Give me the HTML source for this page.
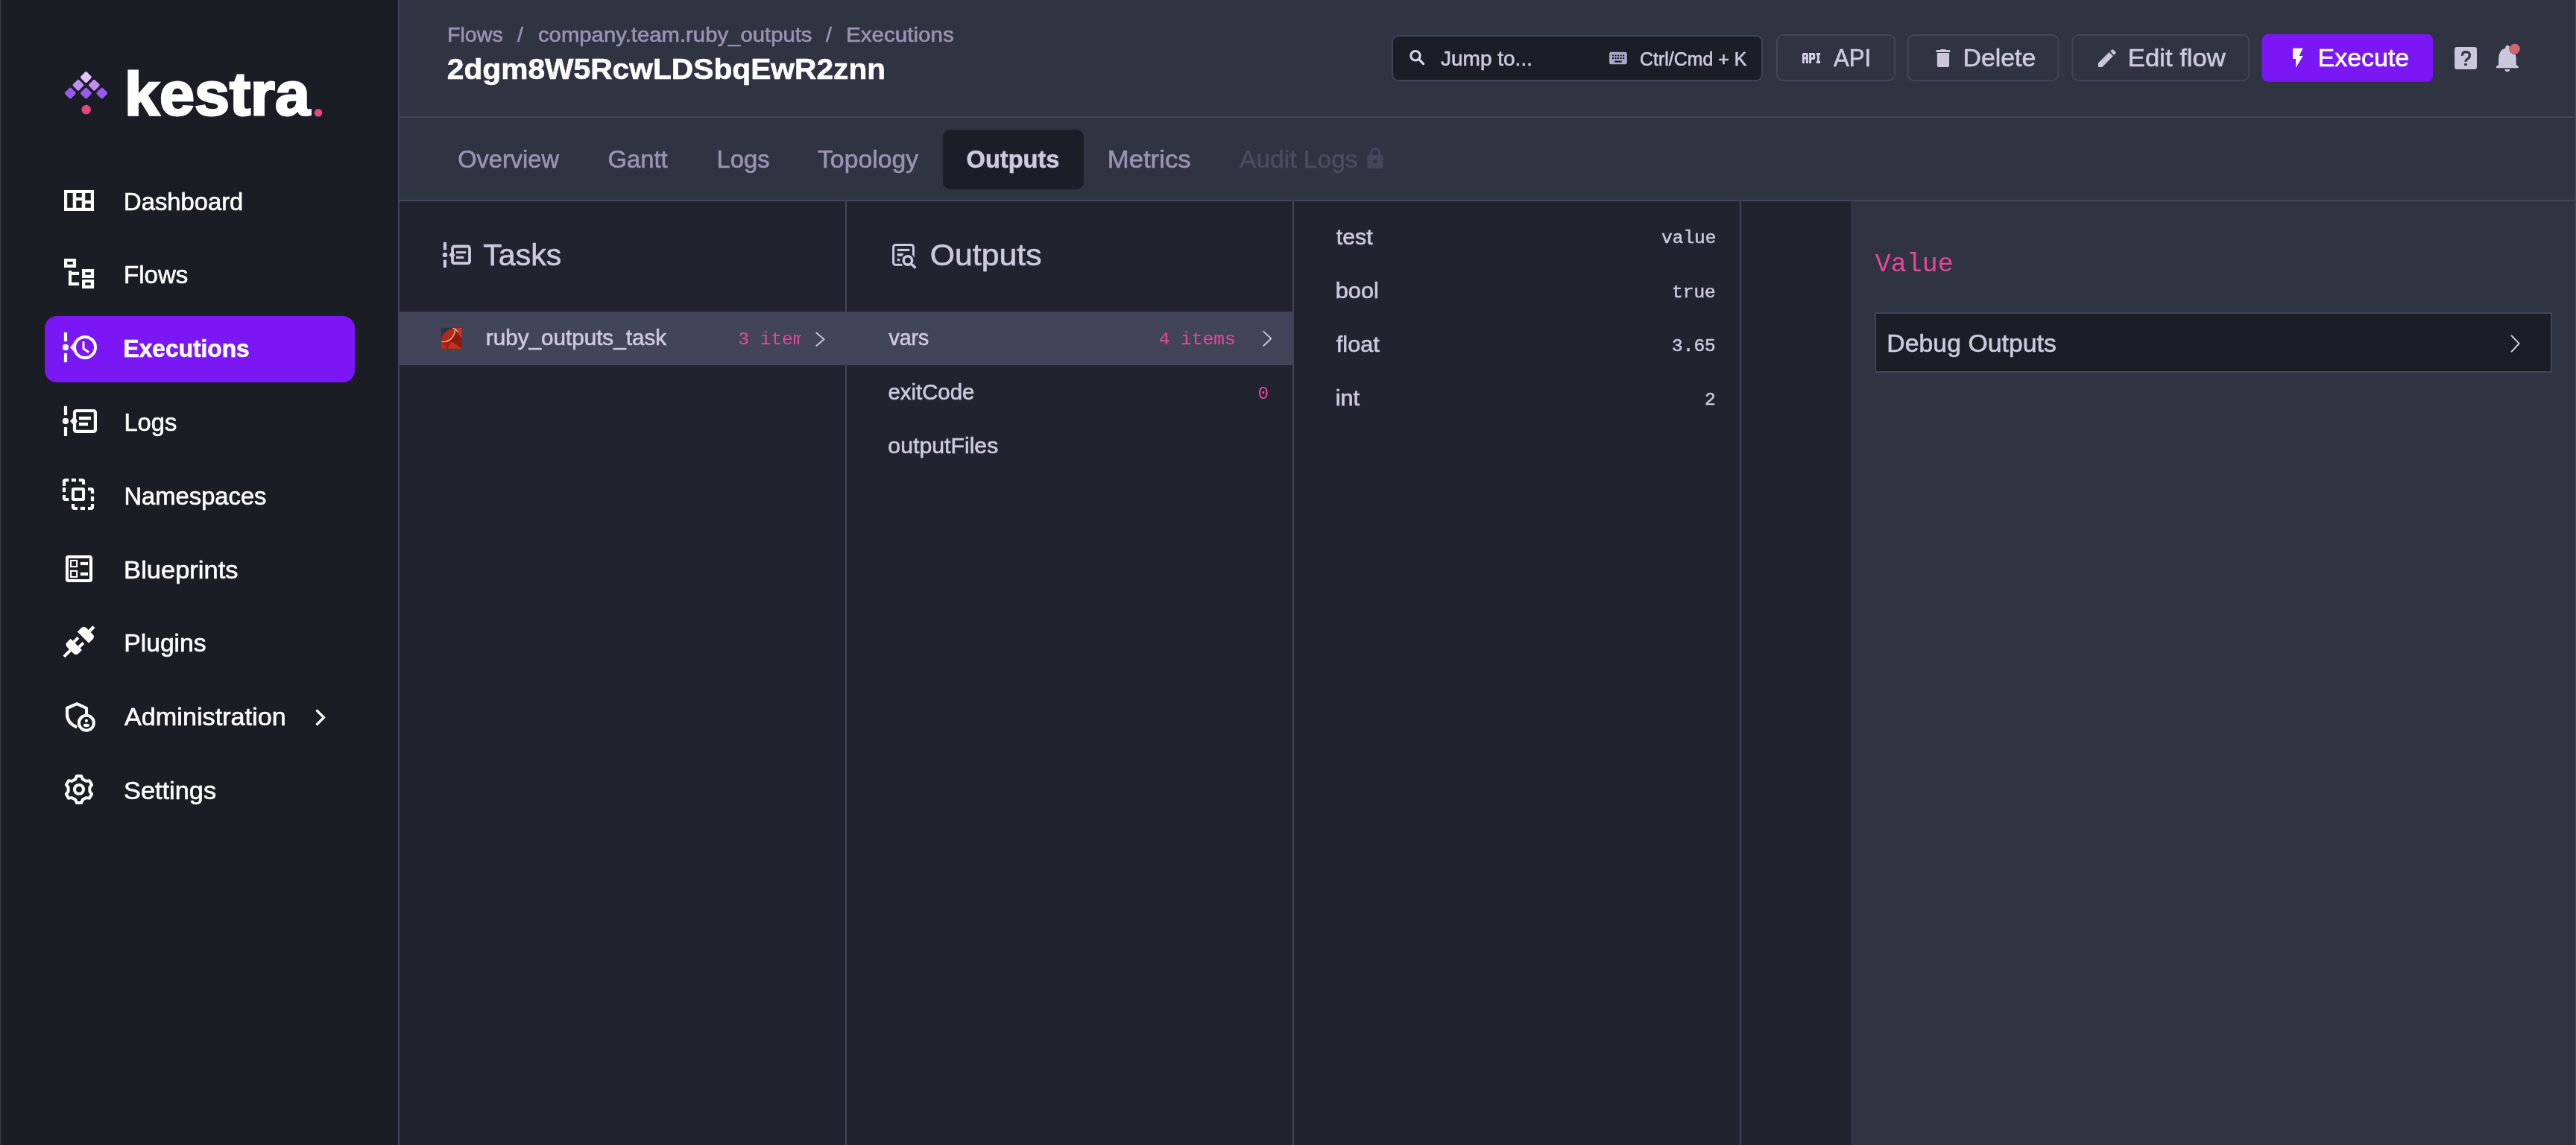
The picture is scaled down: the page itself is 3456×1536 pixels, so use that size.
<!DOCTYPE html>
<html><head><meta charset="utf-8"><title>Kestra - Execution Outputs</title>
<style>
html,body{margin:0;padding:0;width:3456px;height:1536px;overflow:hidden;background:#21242E;}
svg{display:block;will-change:transform;}
</style></head>
<body>
<svg width="3456" height="1536" viewBox="0 0 3456 1536" font-family="Liberation Sans, sans-serif">
<defs>
  <clipPath id="clip3"><rect x="980" y="420" width="94.5" height="70"/></clipPath>
  <mask id="bellmask"><rect x="3330" y="50" width="70" height="60" fill="#fff"/><circle cx="3373.9" cy="65.6" r="7.4" fill="#000"/></mask>
  <mask id="outmask"><rect x="1180" y="310" width="70" height="70" fill="#fff"/><circle cx="1217.9" cy="349.4" r="9.6" fill="#000"/></mask>
  <linearGradient id="rubyg" x1="0" y1="0" x2="1" y2="1">
    <stop offset="0" stop-color="#A8200F"/><stop offset="0.5" stop-color="#C93A22"/><stop offset="1" stop-color="#8E1A0E"/>
  </linearGradient>
</defs>
<!-- ===== SIDEBAR ===== -->
<rect x="0" y="0" width="534" height="1536" fill="#1B1D25"/>
<rect x="0" y="0" width="1" height="1536" fill="#363940"/><rect x="1" y="0" width="1" height="1536" fill="#24262D"/>
<rect x="534" y="0" width="2" height="1536" fill="#404559"/>

<!-- logo -->
<g id="logo">
  <rect x="109.60" y="97.80" width="11.6" height="11.6" rx="2" fill="#E3C6FD" transform="rotate(45 115.4 103.6)"/>
  <rect x="99.20" y="108.40" width="11.6" height="11.6" rx="2" fill="#BF8DF4" transform="rotate(45 105 114.2)"/>
  <rect x="120.50" y="108.40" width="11.6" height="11.6" rx="2" fill="#BF8DF4" transform="rotate(45 126.3 114.2)"/>
  <rect x="88.50" y="119.20" width="11.6" height="11.6" rx="2" fill="#9B58F4" transform="rotate(45 94.3 125)"/>
  <rect x="109.60" y="119.20" width="11.6" height="11.6" rx="2" fill="#9B58F4" transform="rotate(45 115.4 125)"/>
  <rect x="130.90" y="119.20" width="11.6" height="11.6" rx="2" fill="#9B58F4" transform="rotate(45 136.7 125)"/>
  <circle cx="115.7" cy="147.1" r="6.3" fill="#E4477D"/>
  <text x="167" y="153.7" font-size="82" font-weight="700" fill="#FFFFFF" stroke="#FFFFFF" stroke-width="2.8" textLength="249" lengthAdjust="spacingAndGlyphs">kestra</text>
  <circle cx="427" cy="151.2" r="5.3" fill="#E4477D"/>
</g>

<!-- active menu bg -->
<rect x="60" y="424" width="416" height="89" rx="16" fill="#7B17F5"/>

<!-- menu icons -->
<g id="menuicons" fill="#FFFFFF">
  <!-- dashboard -->
  <path fill-rule="evenodd" d="M86,255 H126 V283 H86 Z M90.2,259.1 V278.65 H97.7 V259.1 Z M102.25,259.1 V264.8 H109.75 V259.1 Z M102.25,269.1 V278.65 H109.75 V269.1 Z M114.3,259.1 V268.65 H121.8 V259.1 Z M114.3,273.2 V278.65 H121.8 V273.2 Z"/>
  <!-- flows -->
  <path fill-rule="evenodd" d="M86,347 H102.1 V359.1 H86 Z M90.2,351 V354.8 H97.8 V351 Z"/>
  <path d="M92,363 H96.1 V364.75 H106.1 V369 H96.1 V378.8 H106.1 V383 H92 Z"/>
  <path fill-rule="evenodd" d="M110,361 H126.1 V373 H110 Z M114.3,365.2 V368.7 H121.8 V365.2 Z"/>
  <path fill-rule="evenodd" d="M110,375 H126.1 V387 H110 Z M114.3,379.1 V382.7 H121.8 V379.1 Z"/>
  <!-- executions -->
  <rect x="85.9" y="445.9" width="4.2" height="12"/>
  <rect x="85.9" y="473.8" width="4.2" height="12.1"/>
  <circle cx="87.95" cy="465.9" r="4.1"/>
  <circle cx="114" cy="465.9" r="14" fill="none" stroke="#FFFFFF" stroke-width="4"/>
  <path d="M93.9,465.9 L101.5,457.5 L101.5,474.3 Z"/>
  <path d="M112,458 V467.7 L119,472.5" fill="none" stroke="#FFFFFF" stroke-width="3" stroke-linejoin="miter"/>
  <!-- logs -->
  <rect x="85.9" y="544.8" width="4.2" height="12.2"/>
  <rect x="85.9" y="572.9" width="4.2" height="12.1"/>
  <circle cx="87.95" cy="564.9" r="4.1"/>
  <rect x="100" y="551" width="27.9" height="27.9" rx="2.5" fill="none" stroke="#FFFFFF" stroke-width="4.2"/>
  <path d="M93.85,564.9 L100,558.5 L104,564.9 L100,571.3 Z"/>
  <rect x="105.9" y="558.8" width="16.1" height="4.4"/>
  <rect x="105.9" y="566.8" width="12.1" height="4.3"/>
  <!-- namespaces -->
  <rect x="98" y="656" width="14" height="14" fill="none" stroke="#FFFFFF" stroke-width="4.1" rx="1"/>
  <path d="M86,652 V646 Q86,644 88,644 H92.2" fill="none" stroke="#FFFFFF" stroke-width="4.2"/>
  <path d="M95.9,644 H102" fill="none" stroke="#FFFFFF" stroke-width="4.2"/>
  <path d="M105.8,644 H110 Q112,644 112,646 V650" fill="none" stroke="#FFFFFF" stroke-width="4.2"/>
  <path d="M86,654 V660.2" fill="none" stroke="#FFFFFF" stroke-width="4.2"/>
  <path d="M86,664 V668 Q86,670 88,670 H92.2" fill="none" stroke="#FFFFFF" stroke-width="4.2"/>
  <path d="M118,656 H122 Q124,656 124,658 V662.2" fill="none" stroke="#FFFFFF" stroke-width="4.2"/>
  <path d="M124,666 V672.2" fill="none" stroke="#FFFFFF" stroke-width="4.2"/>
  <path d="M98,676 V680 Q98,682 100,682 H104" fill="none" stroke="#FFFFFF" stroke-width="4.2"/>
  <path d="M107.9,682 H114" fill="none" stroke="#FFFFFF" stroke-width="4.2"/>
  <path d="M118,682 H122 Q124,682 124,680 V676" fill="none" stroke="#FFFFFF" stroke-width="4.2"/>
  <!-- blueprints -->
  <rect x="90" y="747" width="32" height="32" rx="2" fill="none" stroke="#FFFFFF" stroke-width="4.1"/>
  <rect x="95" y="752" width="8.1" height="8.1" fill="none" stroke="#FFFFFF" stroke-width="2.1"/>
  <rect x="95" y="765.9" width="8.1" height="8.1" fill="none" stroke="#FFFFFF" stroke-width="2.1"/>
  <rect x="107.9" y="753.9" width="10.1" height="4.2"/>
  <rect x="107.9" y="767.9" width="10.1" height="4.3"/>
  <!-- plugins -->
  <g transform="translate(105.85 860.85) rotate(-45)">
    <path d="M7.95,-10.8 H15.2 Q20.2,-10.8 20.2,-5.8 V5.8 Q20.2,10.8 15.2,10.8 H7.95 Z"/>
    <rect x="20" y="-2.2" width="8.4" height="4.4"/>
    <path d="M-5,-10.8 H-11.3 Q-16.3,-10.8 -16.3,-5.8 V5.8 Q-16.3,10.8 -11.3,10.8 H-5 Z"/>
    <rect x="-5.2" y="-6.5" width="8.4" height="4"/>
    <rect x="-5.2" y="3.3" width="8.4" height="4"/>
    <rect x="-28.2" y="-2" width="13.2" height="4"/>
  </g>
  <!-- administration -->
  <path d="M116,959 V950 L103.2,944.2 L90,950 V958 Q90,970 103.2,975.6" fill="none" stroke="#FFFFFF" stroke-width="4.1" stroke-linejoin="round"/>
  <circle cx="115.9" cy="969.8" r="10" fill="none" stroke="#FFFFFF" stroke-width="4"/>
  <circle cx="115.9" cy="966.9" r="2.1"/>
  <ellipse cx="115.9" cy="973" rx="4.1" ry="2.2"/>
  <!-- settings -->
  <path d="M101.10,1045.25 L102.91,1041.06 L109.09,1041.06 L110.90,1045.25 L115.46,1047.88 L119.99,1047.36 L123.08,1052.70 L120.36,1056.37 L120.36,1061.63 L123.08,1065.30 L119.99,1070.64 L115.46,1070.12 L110.90,1072.75 L109.09,1076.94 L102.91,1076.94 L101.10,1072.75 L96.54,1070.12 L92.01,1070.64 L88.92,1065.30 L91.64,1061.63 L91.64,1056.37 L88.92,1052.70 L92.01,1047.36 L96.54,1047.88 Z" fill="none" stroke="#FFFFFF" stroke-width="4" stroke-linejoin="round"/>
  <circle cx="106" cy="1059" r="6" fill="none" stroke="#FFFFFF" stroke-width="4.2"/>
  <!-- admin chevron -->
  <path d="M424.5,952.5 L434.5,962.5 L424.5,972.5" fill="none" stroke="#FFFFFF" stroke-width="3.2"/>
</g>

<!-- ===== HEADER ===== -->
<rect x="536" y="0" width="2919" height="156" fill="#2F3342"/>
<rect x="536" y="156" width="2920" height="2" fill="#404559"/>

<!-- jump to -->
<rect x="1868" y="48" width="496" height="60" rx="8" fill="#1C1E27" stroke="#404559" stroke-width="2"/>
<circle cx="1899" cy="74.8" r="6.2" fill="none" stroke="#D9D5EE" stroke-width="3"/>
<path d="M1903.8,79.6 L1909.6,85.6" stroke="#D9D5EE" stroke-width="3.2" stroke-linecap="round"/>
<path fill-rule="evenodd" fill="#ADA5CC" d="M2161.6,69.7 H2180.3 Q2182.8,69.7 2182.8,72.2 V83.8 Q2182.8,86.3 2180.3,86.3 H2161.6 Q2159.1,86.3 2159.1,83.8 V72.2 Q2159.1,69.7 2161.6,69.7 Z
 M2162.9,73.4 h2.2 v2.2 h-2.2 Z M2166.4,73.4 h2.2 v2.2 h-2.2 Z M2169.9,73.4 h2.2 v2.2 h-2.2 Z M2173.5,73.4 h2.2 v2.2 h-2.2 Z M2177,73.4 h2.2 v2.2 h-2.2 Z
 M2162.9,77 h2.2 v2.2 h-2.2 Z M2166.4,77 h2.2 v2.2 h-2.2 Z M2169.9,77 h2.2 v2.2 h-2.2 Z M2173.5,77 h2.2 v2.2 h-2.2 Z M2177,77 h2.2 v2.2 h-2.2 Z
 M2166.2,81.4 h9.6 v2.3 h-9.6 Z"/>
<!-- API -->
<rect x="2384" y="47" width="158" height="61" rx="8" fill="none" stroke="#404559" stroke-width="2"/>
<g fill="#D2CEE4">
  <path fill-rule="evenodd" d="M2419.9,70.9 H2423.9 Q2425.9,70.9 2425.9,72.9 V84.9 H2422.9 V79.5 H2420.9 V84.9 H2417.9 V72.9 Q2417.9,70.9 2419.9,70.9 Z M2420.9,73.9 V76.5 H2422.9 V73.9 Z"/>
  <path fill-rule="evenodd" d="M2427.1,70.9 H2433.2 Q2435.2,70.9 2435.2,72.9 V78 Q2435.2,80 2433.2,80 H2430.1 V84.9 H2427.1 Z M2430.1,73.9 V77 H2432.2 V73.9 Z"/>
  <path d="M2436.7,70.9 H2442.1 V73.9 H2440.9 V81.9 H2442.1 V84.9 H2436.7 V81.9 H2437.9 V73.9 H2436.7 Z"/>
</g>
<!-- Delete -->
<rect x="2559.8" y="47" width="201.6" height="61" rx="8" fill="none" stroke="#404559" stroke-width="2"/>
<g fill="#CAC6DC">
  <path d="M2602.9,67.1 Q2603.5,65.9 2605,65.9 H2609 Q2610.5,65.9 2611.1,67.1 H2616.35 V70.05 H2597.65 V67.1 Z"/>
  <path d="M2598.9,70.9 H2615.1 V88 Q2615.1,90 2613.1,90 H2600.9 Q2598.9,90 2598.9,88 Z"/>
</g>
<!-- Edit flow -->
<rect x="2780.3" y="47" width="237" height="61" rx="8" fill="none" stroke="#404559" stroke-width="2"/>
<g fill="#CAC6DC">
  <path d="M2815,84.5 L2829.7,70.1 L2835,75.3 L2820.3,90 H2815 Z"/>
  <path d="M2831.1,68.5 L2834.4,65.9 L2839.1,70.4 L2836.3,73.9 Z"/>
</g>
<!-- Execute -->
<rect x="3034.7" y="45.8" width="229.3" height="64" rx="8" fill="#7B17F5"/>
<path fill="#FFFFFF" d="M3076.05,64.64 H3089.7 L3084.6,75.1 H3089.7 L3080.2,90.8 L3080.1,79.1 H3076.05 Z"/>
<!-- help -->
<rect x="3293.1" y="62.9" width="29.9" height="30.1" rx="3.2" fill="#CAC6DC"/>
<path d="M3303.2,74.8 Q3303.2,69.6 3308.3,69.6 Q3313.4,69.6 3313.4,74.5 Q3313.4,77 3310.8,78.8 Q3307.9,80.6 3307.9,82.8" fill="none" stroke="#2F3342" stroke-width="3.1"/>
<rect x="3306.1" y="85.1" width="3.8" height="2.8" fill="#2F3342"/>
<!-- bell -->
<g fill="#CAC6DC" mask="url(#bellmask)">
  <path d="M3361.2,64.4 Q3361.2,60.8 3364.1,60.8 Q3367.1,60.8 3367.1,64.4 Q3375.7,67.5 3375.7,78 V86.5 L3378.9,89.4 V91.2 H3348.9 V89.4 L3352.1,86.5 V78 Q3352.1,67.5 3361.2,64.4 Z"/>
  <path d="M3360.5,93 H3367.3 Q3367,96.2 3363.9,96.2 Q3360.8,96.2 3360.5,93 Z"/>
</g>
<circle cx="3373.9" cy="65.6" r="6.9" fill="#D6656A"/>

<!-- ===== TABS ===== -->
<rect x="536" y="158" width="2919" height="110" fill="#2F3342"/>
<rect x="536" y="268" width="2920" height="2" fill="#404559"/>
<rect x="1265" y="174" width="189" height="80" rx="10" fill="#1C1E27"/>
<g fill="#444759">
  <path d="M1838.2,208.1 V204.9 Q1838.2,198.1 1845,198.1 Q1851.85,198.1 1851.85,204.9 V208.1 H1848.85 V204.9 Q1848.85,201.1 1845,201.1 Q1841.2,201.1 1841.2,204.9 V208.1 Z"/>
  <path fill-rule="evenodd" d="M1836.2,208.1 H1853.7 Q1855.7,208.1 1855.7,210.1 V224.1 Q1855.7,226.1 1853.7,226.1 H1836.2 Q1834.2,226.1 1834.2,224.1 V210.1 Q1834.2,208.1 1836.2,208.1 Z M1844.9,214.3 A2.7,2.7 0 1 0 1844.91,214.3 Z"/>
</g>

<!-- ===== CONTENT ===== -->
<rect x="536" y="270" width="1947" height="1266" fill="#21242E"/>
<rect x="2483" y="270" width="972" height="1266" fill="#2F3342"/>
<rect x="3455" y="0" width="1" height="1536" fill="#4A4D5D"/>
<rect x="536" y="418" width="1198" height="72" fill="#424559"/>
<rect x="1134" y="270" width="2" height="148" fill="#404559"/>
<rect x="1134" y="490" width="2" height="1046" fill="#404559"/>
<rect x="1734" y="270" width="2" height="1266" fill="#404559"/>
<rect x="2334" y="270" width="2" height="1266" fill="#404559"/>

<!-- tasks header icon -->
<g fill="#CDC9DF">
  <rect x="594.9" y="324.9" width="4.1" height="10.3"/>
  <rect x="594.9" y="348.6" width="4.1" height="10.3"/>
  <circle cx="597" cy="341.9" r="3.2"/>
  <rect x="607" y="330.5" width="23" height="22.7" rx="2.5" fill="none" stroke="#CDC9DF" stroke-width="3.8"/>
  <path d="M602.3,341.9 L607,336.8 L610.5,341.9 L607,347 Z"/>
  <rect x="611.9" y="337.1" width="13.4" height="2.9"/>
  <rect x="611.9" y="343.8" width="10.3" height="3.1"/>
</g>
<!-- outputs header icon -->
<g fill="#CDC9DF">
  <g mask="url(#outmask)">
    <rect x="1198.6" y="328.5" width="26.8" height="26.8" rx="3" fill="none" stroke="#CDC9DF" stroke-width="3"/>
    <rect x="1203.8" y="333.9" width="16.4" height="3"/>
    <rect x="1203.8" y="340" width="8" height="3.6"/>
  </g>
  <rect x="1203.8" y="346.9" width="3.4" height="3.4"/>
  <circle cx="1217.9" cy="349.4" r="5.7" fill="none" stroke="#CDC9DF" stroke-width="3.6"/>
  <path d="M1222.2,353.7 L1228.4,359.4" stroke="#CDC9DF" stroke-width="3.4"/>
</g>
<!-- ruby icon -->
<g>
  <rect x="592.1" y="439.9" width="27.6" height="27.8" fill="#2E3141"/>
  <path d="M592.1,455.5 Q594,449 600,444.5 Q604,441.5 607,440 H619.7 V467.7 H592.1 Z" fill="#A52210"/>
  <path d="M610,441 L619.7,440 L619.2,454 Z" fill="#C23A22"/>
  <path d="M610,441 L619.2,454 L619.5,467.7 L606,458 Z" fill="#8E1C0E"/>
  <path d="M606,458 L619.5,467.7 H601 Z" fill="#BF3620"/>
  <path d="M592.1,457 L601,467.7 H592.1 Z" fill="#B3301B"/>
  <ellipse cx="601.4" cy="449.2" rx="11.2" ry="5.4" transform="rotate(-40 601.4 449.2)" fill="#B02A14"/>
  <path d="M592.6,458.2 Q598,459.6 604.5,455 Q610,450.5 610.8,441.2" fill="none" stroke="#F6E3DE" stroke-width="1.1"/>
  <path d="M607.5,440.4 L611.2,441.3 L614,446" fill="none" stroke="#F6E3DE" stroke-width="0.9"/>
</g>
<!-- row chevrons -->
<g fill="none" stroke="#CDC9DF" stroke-width="1.9">
  <path d="M1094.8,446 L1105.5,455.2 L1094.8,464.2"/>
  <path d="M1694.8,444.4 L1705.3,454.3 L1694.8,464.2"/>
</g>

<!-- right panel -->
<rect x="2516" y="420" width="907" height="79" fill="#1C1E27" stroke="#404559" stroke-width="2"/>
<path d="M3369.1,449.8 L3379.6,460.9 L3369.1,472.1" fill="none" stroke="#D5D1E8" stroke-width="1.9"/>

<text x="166.04" y="282" font-family="Liberation Sans, sans-serif" font-weight="400" font-size="33.5" fill="#FFFFFF" stroke="#FFFFFF" stroke-width="0.6" textLength="160.31" lengthAdjust="spacingAndGlyphs">Dashboard</text>
<text x="166.03" y="380" font-family="Liberation Sans, sans-serif" font-weight="400" font-size="33.5" fill="#FFFFFF" stroke="#FFFFFF" stroke-width="0.6" textLength="86.35" lengthAdjust="spacingAndGlyphs">Flows</text>
<text x="165.61" y="479.2" font-family="Liberation Sans, sans-serif" font-weight="700" font-size="33.5" fill="#FFFFFF" stroke="#FFFFFF" stroke-width="0.6" textLength="169.09" lengthAdjust="spacingAndGlyphs">Executions</text>
<text x="166.45" y="578.3" font-family="Liberation Sans, sans-serif" font-weight="400" font-size="33.5" fill="#FFFFFF" stroke="#FFFFFF" stroke-width="0.6" textLength="70.89" lengthAdjust="spacingAndGlyphs">Logs</text>
<text x="166.45" y="677" font-family="Liberation Sans, sans-serif" font-weight="400" font-size="33.5" fill="#FFFFFF" stroke="#FFFFFF" stroke-width="0.6" textLength="191.06" lengthAdjust="spacingAndGlyphs">Namespaces</text>
<text x="166.14" y="776" font-family="Liberation Sans, sans-serif" font-weight="400" font-size="33.5" fill="#FFFFFF" stroke="#FFFFFF" stroke-width="0.6" textLength="153.36" lengthAdjust="spacingAndGlyphs">Blueprints</text>
<text x="166.19" y="874" font-family="Liberation Sans, sans-serif" font-weight="400" font-size="33.5" fill="#FFFFFF" stroke="#FFFFFF" stroke-width="0.6" textLength="110.49" lengthAdjust="spacingAndGlyphs">Plugins</text>
<text x="167.00" y="973.3" font-family="Liberation Sans, sans-serif" font-weight="400" font-size="33.5" fill="#FFFFFF" stroke="#FFFFFF" stroke-width="0.6" textLength="216.79" lengthAdjust="spacingAndGlyphs">Administration</text>
<text x="165.97" y="1072" font-family="Liberation Sans, sans-serif" font-weight="400" font-size="33.5" fill="#FFFFFF" stroke="#FFFFFF" stroke-width="0.6" textLength="124.10" lengthAdjust="spacingAndGlyphs">Settings</text>
<text x="599.99" y="55.8" font-family="Liberation Sans, sans-serif" font-weight="400" font-size="28.5" fill="#9A94B4" stroke="#9A94B4" stroke-width="0.6" textLength="74.85" lengthAdjust="spacingAndGlyphs">Flows</text>
<text x="694.00" y="55.8" font-family="Liberation Sans, sans-serif" font-weight="400" font-size="28.5" fill="#9A94B4" stroke="#9A94B4" stroke-width="0.6">/</text>
<text x="721.97" y="55.8" font-family="Liberation Sans, sans-serif" font-weight="400" font-size="28.5" fill="#9A94B4" stroke="#9A94B4" stroke-width="0.6" textLength="367.56" lengthAdjust="spacingAndGlyphs">company.team.ruby_outputs</text>
<text x="1108.00" y="55.8" font-family="Liberation Sans, sans-serif" font-weight="400" font-size="28.5" fill="#9A94B4" stroke="#9A94B4" stroke-width="0.6">/</text>
<text x="1134.92" y="55.8" font-family="Liberation Sans, sans-serif" font-weight="400" font-size="28.5" fill="#9A94B4" stroke="#9A94B4" stroke-width="0.6" textLength="144.92" lengthAdjust="spacingAndGlyphs">Executions</text>
<text x="599.76" y="105.6" font-family="Liberation Sans, sans-serif" font-weight="700" font-size="39" fill="#FFFFFF" stroke="#FFFFFF" stroke-width="0.6" textLength="588.50" lengthAdjust="spacingAndGlyphs">2dgm8W5RcwLDSbqEwR2znn</text>
<text x="614.21" y="225" font-family="Liberation Sans, sans-serif" font-weight="400" font-size="33" fill="#9A94B4" stroke="#9A94B4" stroke-width="0.6" textLength="135.82" lengthAdjust="spacingAndGlyphs">Overview</text>
<text x="815.40" y="225" font-family="Liberation Sans, sans-serif" font-weight="400" font-size="33" fill="#9A94B4" stroke="#9A94B4" stroke-width="0.6" textLength="80.32" lengthAdjust="spacingAndGlyphs">Gantt</text>
<text x="961.41" y="225" font-family="Liberation Sans, sans-serif" font-weight="400" font-size="33" fill="#9A94B4" stroke="#9A94B4" stroke-width="0.6" textLength="71.15" lengthAdjust="spacingAndGlyphs">Logs</text>
<text x="1097.00" y="225" font-family="Liberation Sans, sans-serif" font-weight="400" font-size="33" fill="#9A94B4" stroke="#9A94B4" stroke-width="0.6" textLength="135.11" lengthAdjust="spacingAndGlyphs">Topology</text>
<text x="1296.61" y="225" font-family="Liberation Sans, sans-serif" font-weight="700" font-size="33" fill="#CDC9DF" stroke="#CDC9DF" stroke-width="0.6" textLength="124.87" lengthAdjust="spacingAndGlyphs">Outputs</text>
<text x="1485.69" y="225" font-family="Liberation Sans, sans-serif" font-weight="400" font-size="33" fill="#9A94B4" stroke="#9A94B4" stroke-width="0.6" textLength="111.97" lengthAdjust="spacingAndGlyphs">Metrics</text>
<text x="1663.00" y="225" font-family="Liberation Sans, sans-serif" font-weight="400" font-size="33" fill="#4A4D62" stroke="#4A4D62" stroke-width="0.6" textLength="158.67" lengthAdjust="spacingAndGlyphs">Audit Logs</text>
<text x="1933.00" y="87.5" font-family="Liberation Sans, sans-serif" font-weight="400" font-size="28" fill="#CDC9DF" stroke="#CDC9DF" stroke-width="0.6" textLength="122.94" lengthAdjust="spacingAndGlyphs">Jump to...</text>
<text x="2200.04" y="87.5" font-family="Liberation Sans, sans-serif" font-weight="400" font-size="26" fill="#CDC9DF" stroke="#CDC9DF" stroke-width="0.6" textLength="143.31" lengthAdjust="spacingAndGlyphs">Ctrl/Cmd + K</text>
<text x="2460.00" y="88.6" font-family="Liberation Sans, sans-serif" font-weight="400" font-size="32.5" fill="#CDC9DF" stroke="#CDC9DF" stroke-width="0.6" textLength="50.29" lengthAdjust="spacingAndGlyphs">API</text>
<text x="2633.41" y="89" font-family="Liberation Sans, sans-serif" font-weight="400" font-size="32.5" fill="#CDC9DF" stroke="#CDC9DF" stroke-width="0.6" textLength="97.98" lengthAdjust="spacingAndGlyphs">Delete</text>
<text x="2854.87" y="89" font-family="Liberation Sans, sans-serif" font-weight="400" font-size="32.5" fill="#CDC9DF" stroke="#CDC9DF" stroke-width="0.6" textLength="130.95" lengthAdjust="spacingAndGlyphs">Edit flow</text>
<text x="3109.61" y="89" font-family="Liberation Sans, sans-serif" font-weight="400" font-size="32.5" fill="#FFFFFF" stroke="#FFFFFF" stroke-width="0.6" textLength="122.49" lengthAdjust="spacingAndGlyphs">Execute</text>
<text x="648.30" y="356" font-family="Liberation Sans, sans-serif" font-weight="400" font-size="41" fill="#CDC9DF" stroke="#CDC9DF" stroke-width="0.6" textLength="104.91" lengthAdjust="spacingAndGlyphs">Tasks</text>
<text x="1247.76" y="356.2" font-family="Liberation Sans, sans-serif" font-weight="400" font-size="41" fill="#CDC9DF" stroke="#CDC9DF" stroke-width="0.6" textLength="149.86" lengthAdjust="spacingAndGlyphs">Outputs</text>
<text x="651.79" y="463" font-family="Liberation Sans, sans-serif" font-weight="400" font-size="29.5" fill="#CDC9DF" stroke="#CDC9DF" stroke-width="0.6" textLength="242.28" lengthAdjust="spacingAndGlyphs">ruby_outputs_task</text>
<text x="1192.40" y="463" font-family="Liberation Sans, sans-serif" font-weight="400" font-size="29.5" fill="#CDC9DF" stroke="#CDC9DF" stroke-width="0.6" textLength="53.81" lengthAdjust="spacingAndGlyphs">vars</text>
<text x="1191.40" y="535.5" font-family="Liberation Sans, sans-serif" font-weight="400" font-size="29.5" fill="#CDC9DF" stroke="#CDC9DF" stroke-width="0.6" textLength="116.03" lengthAdjust="spacingAndGlyphs">exitCode</text>
<text x="1191.37" y="607.5" font-family="Liberation Sans, sans-serif" font-weight="400" font-size="29.5" fill="#CDC9DF" stroke="#CDC9DF" stroke-width="0.6" textLength="147.95" lengthAdjust="spacingAndGlyphs">outputFiles</text>
<text x="1792.80" y="328.2" font-family="Liberation Sans, sans-serif" font-weight="400" font-size="29.5" fill="#CDC9DF" stroke="#CDC9DF" stroke-width="0.6" textLength="48.75" lengthAdjust="spacingAndGlyphs">test</text>
<text x="1791.76" y="400" font-family="Liberation Sans, sans-serif" font-weight="400" font-size="29.5" fill="#CDC9DF" stroke="#CDC9DF" stroke-width="0.6" textLength="58.10" lengthAdjust="spacingAndGlyphs">bool</text>
<text x="1792.80" y="472.3" font-family="Liberation Sans, sans-serif" font-weight="400" font-size="29.5" fill="#CDC9DF" stroke="#CDC9DF" stroke-width="0.6" textLength="57.96" lengthAdjust="spacingAndGlyphs">float</text>
<text x="1791.76" y="544" font-family="Liberation Sans, sans-serif" font-weight="400" font-size="29.5" fill="#CDC9DF" stroke="#CDC9DF" stroke-width="0.6" textLength="32.38" lengthAdjust="spacingAndGlyphs">int</text>
<text x="2229.00" y="326.4" font-family="Liberation Mono, monospace" font-weight="400" font-size="24.5" fill="#CDC9DF" stroke="#CDC9DF" stroke-width="0.5">value</text>
<text x="2243.00" y="398.5" font-family="Liberation Mono, monospace" font-weight="400" font-size="24.5" fill="#CDC9DF" stroke="#CDC9DF" stroke-width="0.5">true</text>
<text x="2243.00" y="470.5" font-family="Liberation Mono, monospace" font-weight="400" font-size="24.5" fill="#CDC9DF" stroke="#CDC9DF" stroke-width="0.5">3.65</text>
<text x="2287.00" y="542.5" font-family="Liberation Mono, monospace" font-weight="400" font-size="24.5" fill="#CDC9DF" stroke="#CDC9DF" stroke-width="0.5">2</text>
<text x="990.30" y="462.1" font-family="Liberation Mono, monospace" font-weight="400" font-size="24.5" fill="#E8489B" clip-path="url(#clip3)">3 items</text>
<text x="1554.70" y="462.1" font-family="Liberation Mono, monospace" font-weight="400" font-size="24.5" fill="#E8489B">4 items</text>
<text x="1687.60" y="534.5" font-family="Liberation Mono, monospace" font-weight="400" font-size="24.5" fill="#E8489B">0</text>
<text x="2515.80" y="364.2" font-family="Liberation Mono, monospace" font-weight="400" font-size="35" fill="#E8489B">Value</text>
<text x="2531.35" y="472.3" font-family="Liberation Sans, sans-serif" font-weight="400" font-size="33" fill="#CDC9DF" stroke="#CDC9DF" stroke-width="0.6" textLength="227.46" lengthAdjust="spacingAndGlyphs">Debug Outputs</text>
</svg>
</body></html>
